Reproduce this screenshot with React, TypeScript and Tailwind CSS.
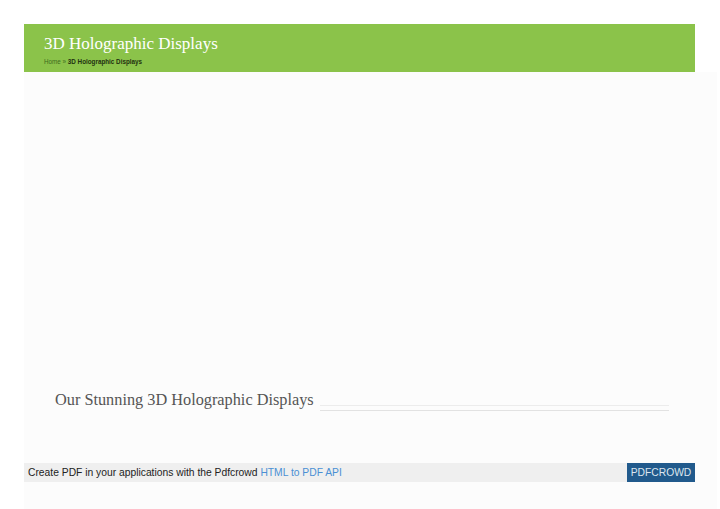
import React from 'react'

const App: React.FC = () => {
  return (
    <div className="w-[720px] h-[509px] bg-white pt-6 overflow-hidden">
      {/* Page header */}
      <div className="ml-6 w-[671px] h-12 bg-[#8bc34a] pl-5 pt-[10px]">
        <h1 className="text-[17px] leading-5 text-white font-['Liberation_Serif',serif]">
          3D Holographic Displays
        </h1>
        <p className="mt-[4px] text-[6.3px] leading-[8px] font-['Liberation_Sans',sans-serif]">
          <span className="text-[#3d6b1e]">Home</span>
          <span className="text-[#3d6b1e]"> » </span>
          <span className="font-bold text-[#1f3010]">3D Holographic Displays</span>
        </p>
      </div>

      {/* Content */}
      <div className="ml-6 w-[693px] h-[437px] bg-[#fcfcfc] pt-[317px]">
        <div className="flex items-center pl-[31px] pr-[48px]">
          <h2 className="text-[16.3px] leading-5 text-[#555] font-['Liberation_Serif',serif] whitespace-nowrap">
            Our Stunning 3D Holographic Displays
          </h2>
          <div className="ml-[6px] flex-1 mt-[16px] flex flex-col gap-[4px]">
            <div className="h-px bg-[#ececec]" />
            <div className="h-px bg-[#e2e2e2]" />
          </div>
        </div>

        {/* Pdfcrowd bar */}
        <div className="mt-[52px] w-[671px] h-[19px] bg-[#efefef] flex items-center justify-between font-['Liberation_Sans',sans-serif] text-[10.3px]">
          <p className="pl-1 text-[#222]">
            Create PDF in your applications with the Pdfcrowd{' '}
            <span className="text-[#4a8fd4]">HTML to PDF API</span>
          </p>
          <div className="h-[19px] w-[68px] bg-[#215a8c] text-[#dde6ef] flex items-center justify-center">
            PDFCROWD
          </div>
        </div>
      </div>
    </div>
  )
}

export default App
